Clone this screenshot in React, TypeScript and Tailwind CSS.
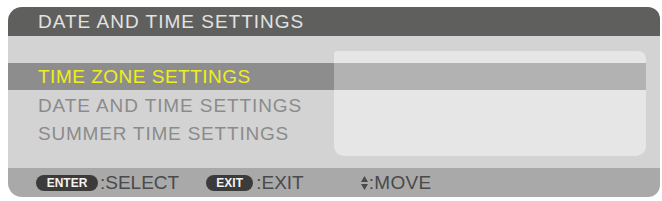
import React from "react";

const font = { fontFamily: '"Liberation Sans", Arial, sans-serif' };

function Pill({ label, w }: { label: string; w: string }) {
  return (
    <span
      className={`${w} h-[16px] rounded-full bg-[#3b3b3b] text-[#f2f2f2] text-[12px] font-bold flex items-center justify-center leading-none`}
    >
      {label}
    </span>
  );
}

export default function App() {
  return (
    <div className="w-[662px] h-[201px] bg-white pt-[7px] pl-[8px]" style={font}>
      <div className="w-[652px] h-[190px] flex flex-col">
        {/* title bar */}
        <div className="h-[29px] bg-[#5f605e] rounded-tl-[14px] rounded-tr-[12px] flex items-center pl-[30px]">
          <span className="text-[19px] leading-none text-[#e2e2e2] tracking-[1px]">
            DATE AND TIME SETTINGS
          </span>
        </div>

        {/* body */}
        <div className="h-[132px] bg-[#d3d3d3] pt-[15px] flex flex-col">
          <div className="flex h-[12px]">
            <div className="w-[326px]" />
            <div className="w-[312px] bg-[#e6e6e6] rounded-tl-[3px] rounded-tr-[8px]" />
          </div>
          <div className="flex h-[27px]">
            <div className="w-[326px] bg-[#8d8d8d] flex items-center pl-[30px]">
              <span className="text-[19px] leading-none text-[#f0ee1e] tracking-[0.5px]">
                TIME ZONE SETTINGS
              </span>
            </div>
            <div className="w-[312px] bg-[#b2b2b2]" />
          </div>
          <div className="flex h-[66px]">
            <div className="w-[326px] flex flex-col pl-[30px] pt-[1px]">
              <div className="h-[28px] flex items-center text-[19px] leading-none text-[#8b8b8b] tracking-[0.9px]">
                DATE AND TIME SETTINGS
              </div>
              <div className="h-[28px] flex items-center text-[19px] leading-none text-[#8b8b8b] tracking-[0.8px]">
                SUMMER TIME SETTINGS
              </div>
            </div>
            <div className="w-[312px] bg-[#e6e6e6] rounded-b-[10px]" />
          </div>
        </div>

        {/* footer */}
        <div className="h-[29px] bg-[#a9a9a9] rounded-bl-[14px] rounded-br-[12px] flex items-center pl-[28px] text-[19px] leading-none text-[#4a4a4a]">
          <div className="flex items-center">
            <Pill label="ENTER" w="w-[62px]" />
            <span className="ml-[2px]">:SELECT</span>
          </div>
          <div className="flex items-center ml-[27px]">
            <Pill label="EXIT" w="w-[47px]" />
            <span className="ml-[3px]">:EXIT</span>
          </div>
          <div className="flex items-center ml-[57px]">
            <svg width="7" height="14" viewBox="0 0 7 14" className="mr-[1px]">
              <path d="M3.5 0 L7 6 L0 6 Z" fill="#4a4a4a" />
              <path d="M3.5 14 L7 8 L0 8 Z" fill="#4a4a4a" />
            </svg>
            <span className="tracking-[0.3px]">:MOVE</span>
          </div>
        </div>
      </div>
    </div>
  );
}
